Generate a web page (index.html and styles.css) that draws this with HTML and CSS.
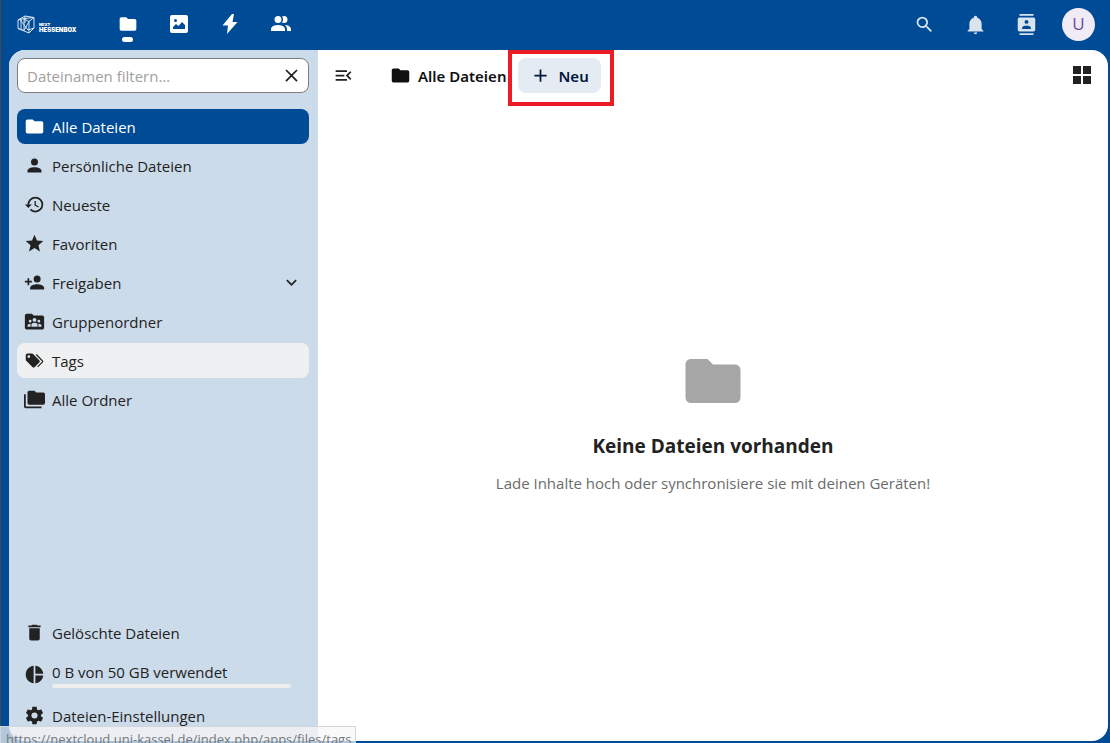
FILE: index.html
```html
<!DOCTYPE html>
<html lang="de">
<head>
<meta charset="utf-8">
<title>Alle Dateien - Next Hessenbox</title>
<link rel="stylesheet" href="styles.css">
</head>
<body>
<svg class="sprite" aria-hidden="true">
  <symbol id="folder" viewBox="0 0 24 24"><path d="M10,4H4C2.89,4 2,4.89 2,6V18A2,2 0 0,0 4,20H20A2,2 0 0,0 22,18V8C22,6.89 21.1,6 20,6H12L10,4Z"/></symbol>
  <symbol id="close" viewBox="0 0 24 24"><path d="M19,6.41L17.59,5L12,10.59L6.41,5L5,6.41L10.59,12L5,17.59L6.41,19L12,13.41L17.59,19L19,17.59L13.41,12L19,6.41Z"/></symbol>
</svg>
<header class="topbar">
  <a class="logo" href="#" aria-label="Next Hessenbox">
    <svg class="logo-mark" viewBox="0 0 18 19" aria-hidden="true"><path d="M1 5 7 3.500 7 15.500 1 13.500ZM1 5 8 1 17 2.500 17 13 12 18 1 13.500M7 3.500 17 2.500M7 4 12 6.500 12 18M12 6.500 17 2.500M3 4.500 11 15 17 13M7 15.500 12 6.500M4 3.500V14.500M8 1V8"/></svg>
    <span class="logo-text"><span class="logo-next">NEXT</span><span class="logo-name">HESSENBOX</span></span>
  </a>
  <nav class="apps" aria-label="Apps">
    <a class="app current" href="#" aria-label="Dateien"><svg class="icon-app"><use href="#folder"/></svg></a>
    <a class="app" href="#" aria-label="Fotos"><svg class="icon-app" viewBox="0 0 20 20"><path fill-rule="evenodd" d="M3 1H17Q19 1 19 3V17Q19 19 17 19H3Q1 19 1 17V3Q1 1 3 1ZM6.500 5A1.500 1.500 0 1 0 6.500 8A1.500 1.500 0 1 0 6.500 5ZM4 15H16V11L13 8L9.500 12L7 10L4 13Z"/></svg></a>
    <a class="app" href="#" aria-label="Aktivität"><svg class="icon-app" viewBox="0 0 20 20"><path d="M12 0 2.500 11.500H8L7 20 17.500 8H12.500L14 0Z"/></svg></a>
    <a class="app" href="#" aria-label="Kontakte"><svg class="icon-people" viewBox="0 0 24 24"><path d="M16 17V19H2V17S2 13 9 13 16 17 16 17M12.500 7.500A3.500 3.500 0 1 0 9 11A3.500 3.500 0 0 0 12.500 7.500M15.940 13A5.320 5.320 0 0 1 18 17V19H22V17S22 13.370 15.940 13M15 4A3.390 3.390 0 0 0 13.070 4.590A5 5 0 0 1 13.070 10.410A3.390 3.390 0 0 0 15 11A3.500 3.500 0 0 0 15 4Z"/></svg></a>
  </nav>
  <div class="tools">
    <button class="tool" type="button" aria-label="Suche"><svg class="icon" viewBox="0 0 24 24"><path d="M9.500,3A6.500,6.500 0 0,1 16,9.500C16,11.110 15.410,12.590 14.440,13.730L14.710,14H15.500L20.500,19L19,20.500L14,15.500V14.710L13.730,14.440C12.590,15.410 11.110,16 9.500,16A6.500,6.500 0 0,1 3,9.500A6.500,6.500 0 0,1 9.500,3M9.500,5C7,5 5,7 5,9.500C5,12 7,14 9.500,14C12,14 14,12 14,9.500C14,7 12,5 9.500,5Z"/></svg></button>
    <button class="tool" type="button" aria-label="Benachrichtigungen"><svg class="icon" viewBox="0 0 24 24"><path d="M21,19V20H3V19L5,17V11C5,7.900 7.030,5.170 10,4.290V4A2,2 0 0,1 14,4V4.290C16.970,5.170 19,7.900 19,11V17L21,19M14,21A2,2 0 0,1 10,21"/></svg></button>
    <button class="tool" type="button" aria-label="Kontakte suchen"><svg class="icon" viewBox="0 0 24 24"><path d="M20,0H4V2H20V0M4,24H20V22H4V24M20,4H4A2,2 0 0,0 2,6V18A2,2 0 0,0 4,20H20A2,2 0 0,0 22,18V6A2,2 0 0,0 20,4M12,6.750A2.250,2.250 0 0,1 14.250,9A2.250,2.250 0 0,1 12,11.250A2.250,2.250 0 0,1 9.750,9A2.250,2.250 0 0,1 12,6.750M17,17H7V15.500C7,13.830 10.330,13 12,13C13.670,13 17,13.830 17,15.500V17Z"/></svg></button>
    <button class="avatar" type="button">U</button>
  </div>
</header>
<div class="content">
  <aside class="sidebar">
    <form class="filter">
      <input class="filter-input" type="text" placeholder="Dateinamen filtern…" aria-label="Dateinamen filtern">
      <button class="filter-clear" type="button" aria-label="Filter leeren"><svg class="icon"><use href="#close"/></svg></button>
    </form>
    <nav class="list" aria-label="Dateien">
      <a class="item active" href="#"><svg class="icon"><use href="#folder"/></svg><span>Alle Dateien</span></a>
      <a class="item" href="#"><svg class="icon" viewBox="0 0 24 24"><path d="M12,4A4,4 0 0,1 16,8A4,4 0 0,1 12,12A4,4 0 0,1 8,8A4,4 0 0,1 12,4M12,14C16.420,14 20,15.790 20,18V20H4V18C4,15.790 7.580,14 12,14Z"/></svg><span>Persönliche Dateien</span></a>
      <a class="item" href="#"><svg class="icon" viewBox="0 0 24 24"><path d="M13.500,8H12V13L16.280,15.540L17,14.330L13.500,12.250V8M13,3A9,9 0 0,0 4,12H1L4.960,16.030L9,12H6A7,7 0 0,1 13,5A7,7 0 0,1 20,12A7,7 0 0,1 13,19C11.070,19 9.320,18.210 8.060,16.940L6.640,18.360C8.270,20 10.500,21 13,21A9,9 0 0,0 22,12A9,9 0 0,0 13,3"/></svg><span>Neueste</span></a>
      <a class="item" href="#"><svg class="icon" viewBox="0 0 24 24"><path d="M12,17.270L18.180,21L16.540,13.970L22,9.240L14.810,8.620L12,2L9.190,8.620L2,9.240L7.450,13.970L5.820,21L12,17.270Z"/></svg><span>Favoriten</span></a>
      <a class="item" href="#"><svg class="icon" viewBox="0 0 24 24"><path d="M15,14C12.330,14 7,15.330 7,18V20H23V18C23,15.330 17.670,14 15,14M6,10V7H4V10H1V12H4V15H6V12H9V10M15,12A4,4 0 0,0 19,8A4,4 0 0,0 15,4A4,4 0 0,0 11,8A4,4 0 0,0 15,12Z"/></svg><span>Freigaben</span><svg class="icon chevron" viewBox="0 0 24 24"><path d="M7.410,8.580L12,13.170L16.590,8.580L18,10L12,16L6,10L7.410,8.580Z"/></svg></a>
      <a class="item" href="#"><svg class="icon" viewBox="0 0 24 24"><path fill-rule="evenodd" d="M3 3H9L11 5H21Q23 5 23 7V19Q23 21 21 21H3Q1 21 1 19V5Q1 3 3 3ZM12 8A2.200 2.200 0 1 0 12 12.400A2.200 2.200 0 1 0 12 8ZM7 10A1.600 1.600 0 1 0 7 13.200A1.600 1.600 0 1 0 7 10ZM17 10A1.600 1.600 0 1 0 17 13.200A1.600 1.600 0 1 0 17 10ZM8.500 18H15.500V16Q15.500 13.500 12 13.500T8.500 16ZM4 18H7.500V14.500Q4 14.500 4 17ZM20 18H16.500V14.500Q20 14.500 20 17Z"/></svg><span>Gruppenordner</span></a>
      <a class="item hovered" href="#"><svg class="icon" viewBox="0 0 24 24"><path fill-rule="evenodd" d="M5.500,9A1.500,1.500 0 0,0 7,7.500A1.500,1.500 0 0,0 5.500,6A1.500,1.500 0 0,0 4,7.500A1.500,1.500 0 0,0 5.500,9M17.410,11.580C17.770,11.940 18,12.440 18,13C18,13.550 17.780,14.050 17.410,14.410L12.410,19.410C12.050,19.770 11.550,20 11,20C10.450,20 9.950,19.780 9.580,19.410L2.590,12.420C2.220,12.050 2,11.550 2,11V6C2,4.890 2.890,4 4,4H9C9.550,4 10.050,4.220 10.410,4.580L17.410,11.580M13.540,5.710L14.540,4.710L21.410,11.580C21.780,11.940 22,12.450 22,13C22,13.550 21.780,14.050 21.420,14.410L16.040,19.790L15.040,18.790L20.750,13L13.540,5.710Z"/></svg><span>Tags</span></a>
      <a class="item" href="#"><svg class="icon" viewBox="0 0 24 24"><path d="M22,4H14L12,2H6A2,2 0 0,0 4,4V16A2,2 0 0,0 6,18H22A2,2 0 0,0 24,16V6A2,2 0 0,0 22,4M2,6H0V20A2,2 0 0,0 2,22H20V20H2V6Z"/></svg><span>Alle Ordner</span></a>
    </nav>
    <div class="list list-bottom">
      <a class="item" href="#"><svg class="icon" viewBox="0 0 24 24"><path d="M19,4H15.500L14.500,3H9.500L8.500,4H5V6H19M6,19A2,2 0 0,0 8,21H16A2,2 0 0,0 18,19V7H6V19Z"/></svg><span>Gelöschte Dateien</span></a>
      <a class="item quota" href="#"><svg class="icon" viewBox="0 0 24 24"><path d="M11,2V22C5.900,21.500 2,17.200 2,12C2,6.800 5.900,2.500 11,2M13,2V11H22C21.500,6.200 17.800,2.500 13,2M13,13V22C17.700,21.500 21.500,17.800 22,13H13Z"/></svg><span class="quota-body"><span>0 B von 50 GB verwendet</span><span class="quota-bar"></span></span></a>
      <button class="item" type="button"><svg class="icon" viewBox="0 0 24 24"><path d="M12,15.500A3.500,3.500 0 0,1 8.500,12A3.500,3.500 0 0,1 12,8.500A3.500,3.500 0 0,1 15.500,12A3.500,3.500 0 0,1 12,15.500M19.430,12.970C19.470,12.650 19.500,12.330 19.500,12C19.500,11.670 19.470,11.340 19.430,11L21.540,9.370C21.730,9.220 21.780,8.950 21.660,8.730L19.660,5.270C19.540,5.050 19.270,4.960 19.050,5.050L16.560,6.050C16.040,5.660 15.500,5.320 14.870,5.070L14.500,2.420C14.460,2.180 14.250,2 14,2H10C9.750,2 9.540,2.180 9.500,2.420L9.130,5.070C8.500,5.320 7.960,5.660 7.440,6.050L4.950,5.050C4.730,4.960 4.460,5.050 4.340,5.270L2.340,8.730C2.210,8.950 2.270,9.220 2.460,9.370L4.570,11C4.530,11.340 4.500,11.670 4.500,12C4.500,12.330 4.530,12.650 4.570,12.970L2.460,14.630C2.270,14.780 2.210,15.050 2.340,15.270L4.340,18.730C4.460,18.950 4.730,19.030 4.950,18.950L7.440,17.940C7.960,18.340 8.500,18.680 9.130,18.930L9.500,21.580C9.540,21.820 9.750,22 10,22H14C14.250,22 14.460,21.820 14.500,21.580L14.870,18.930C15.500,18.670 16.040,18.340 16.560,17.940L19.050,18.950C19.270,19.030 19.540,18.950 19.660,18.730L21.660,15.270C21.780,15.050 21.730,14.780 21.540,14.630L19.430,12.970Z"/></svg><span>Dateien-Einstellungen</span></button>
    </div>
  </aside>
  <main class="files">
    <div class="toolbar">
      <button class="toggle" type="button" aria-label="Navigation schließen"><svg class="icon" viewBox="0 0 24 24"><path d="M21,15.610L19.590,17L14.580,12L19.590,7L21,8.390L17.440,12L21,15.610M3,6H16V8H3V6M3,13V11H13V13H3M3,18V16H16V18H3Z"/></svg></button>
      <a class="crumb" href="#"><svg class="icon"><use href="#folder"/></svg><span>Alle Dateien</span></a>
      <div class="highlight">
        <button class="new" type="button"><svg class="icon" viewBox="0 0 24 24"><path d="M19,13H13V19H11V13H5V11H11V5H13V11H19V13Z"/></svg><span>Neu</span></button>
      </div>
      <button class="view" type="button" aria-label="Kachelansicht"><svg class="icon-grid" viewBox="0 0 24 24"><path d="M3,11H11V3H3M3,21H11V13H3M13,21H21V13H13M13,3V11H21V3"/></svg></button>
    </div>
    <section class="empty">
      <svg class="icon-empty"><use href="#folder"/></svg>
      <h2 class="empty-title">Keine Dateien vorhanden</h2>
      <p class="empty-text">Lade Inhalte hoch oder synchronisiere sie mit deinen Geräten!</p>
    </section>
  </main>
</div>
<div class="status">https://nextcloud.uni-kassel.de/index.php/apps/files/tags</div>
</body>
</html>
```
FILE: styles.css
```css
* { box-sizing: border-box; }

body {
  margin: 0;
  height: 100vh;
  overflow: hidden;
  display: flex;
  flex-direction: column;
  background: #004b96;
  border-left: 1px solid #45484b;
  font-family: "Open Sans", "Noto Sans", sans-serif;
  font-size: 15px;
  line-height: 20px;
  color: #222;
}

a { color: inherit; text-decoration: none; }

button {
  margin: 0;
  padding: 0;
  border: 0;
  background: none;
  color: inherit;
  font: inherit;
}

svg { fill: currentColor; flex: none; display: block; }
.sprite { position: absolute; width: 0; height: 0; }
.icon { width: 21px; height: 21px; }

/* Top bar */
.topbar {
  flex: none;
  height: 50px;
  display: flex;
  align-items: center;
  padding: 0 15px 2px 16px;
  color: #fff;
}

.logo { width: 85px; display: flex; align-items: center; gap: 4px; }
.logo-mark { width: 18px; height: 19px; fill: none; stroke: #dbe6f1; stroke-width: 1; }
.logo-text { display: flex; flex-direction: column; padding-top: 8px; font-family: Inter, sans-serif; font-weight: 900; }
.logo-next { font-size: 4px; line-height: 4px; }
.logo-name { font-size: 6px; line-height: 6px; }

.apps { display: flex; align-self: stretch; }
.app { position: relative; width: 51px; display: flex; align-items: center; justify-content: center; }
.icon-app { width: 20px; height: 20px; }
.icon-people { width: 24px; height: 24px; }
.current::after {
  content: "";
  position: absolute;
  bottom: 6px;
  left: 20px;
  width: 11px;
  height: 5px;
  border-radius: 3px;
  background: #fff;
}

.tools { margin-left: auto; display: flex; align-items: center; }
.tool { width: 51px; display: flex; justify-content: center; color: #d9e4ef; }
.avatar {
  width: 33px;
  height: 33px;
  margin-left: 10px;
  border-radius: 50%;
  background: #f1ebf6;
  color: #6e4aa5;
  font-size: 17px;
}

/* Window body */
.content {
  flex: 1;
  min-height: 0;
  margin: 0 2px 2px 8px;
  display: flex;
  border-radius: 16px;
  overflow: hidden;
  background: #fff;
}

.sidebar {
  flex: none;
  width: 309px;
  padding: 8px 9px 8px 8px;
  display: flex;
  flex-direction: column;
  background: #ccdbea;
}

.filter {
  height: 35px;
  margin-bottom: 16px;
  padding-right: 6px;
  display: flex;
  align-items: center;
  border: 1px solid #7d7d7d;
  border-radius: 8px;
  background: #fff;
}
.filter-input {
  flex: 1;
  min-width: 0;
  padding: 0 9px;
  border: 0;
  outline: 0;
  background: none;
  font: inherit;
}
.filter-input::placeholder { color: #a0a0a0; opacity: 1; }

.list { display: flex; flex-direction: column; gap: 4px; }
.list-bottom { margin-top: auto; }
.item {
  height: 35px;
  padding: 0 7px;
  display: flex;
  align-items: center;
  gap: 7px;
  border-radius: 8px;
  text-align: left;
}
.active { background: #004b96; color: #fff; }
.hovered { background: #eff0f2; }
.chevron { margin-left: auto; }

.quota { height: 40px; }
.quota-body { flex: 1; margin-right: 11px; padding-top: 2px; display: flex; flex-direction: column; gap: 2px; }
.quota-bar { height: 4px; border-radius: 2px; background: #ededed; }

/* File area */
.files { flex: 1; min-width: 0; display: flex; flex-direction: column; }
.toolbar { height: 56px; padding: 0 14px 0 15px; display: flex; align-items: flex-start; }
.toggle { height: 51px; }
.crumb { height: 51px; margin-left: 36px; display: flex; align-items: center; gap: 7px; font-family: "Noto Sans", sans-serif; font-weight: 600; color: #111; }
.highlight { margin-left: 2px; padding: 4px 9px 9px 6px; border: 4px solid #ed1c24; }
.new {
  height: 35px;
  padding: 0 12px;
  display: flex;
  align-items: center;
  gap: 7px;
  border-radius: 8px;
  background: #e5ebf3;
  color: #00163b;
  font-family: "Noto Sans", sans-serif;
  font-weight: 600;
}
.view { height: 50px; margin-left: auto; }
.icon-grid { width: 24px; height: 24px; }

.empty {
  flex: 1;
  padding-bottom: 7px;
  display: flex;
  flex-direction: column;
  align-items: center;
  justify-content: center;
  text-align: center;
}
.icon-empty { width: 66px; height: 66px; color: #a6a6a6; }
.empty-title { margin: 17px 0 12px; font-size: 19px; line-height: 30px; font-weight: 700; }
.empty-text { margin: 0; color: #6b6b6b; }

/* Link target shown by the browser */
.status {
  position: absolute;
  left: 0;
  bottom: -8px;
  height: 25px;
  padding: 2px 4px 0 5px;
  border: 1px solid #d3d6d9;
  background: rgba(247, 247, 247, .72);
  color: #73777b;
  font-size: 13px;
  white-space: nowrap;
}
```
